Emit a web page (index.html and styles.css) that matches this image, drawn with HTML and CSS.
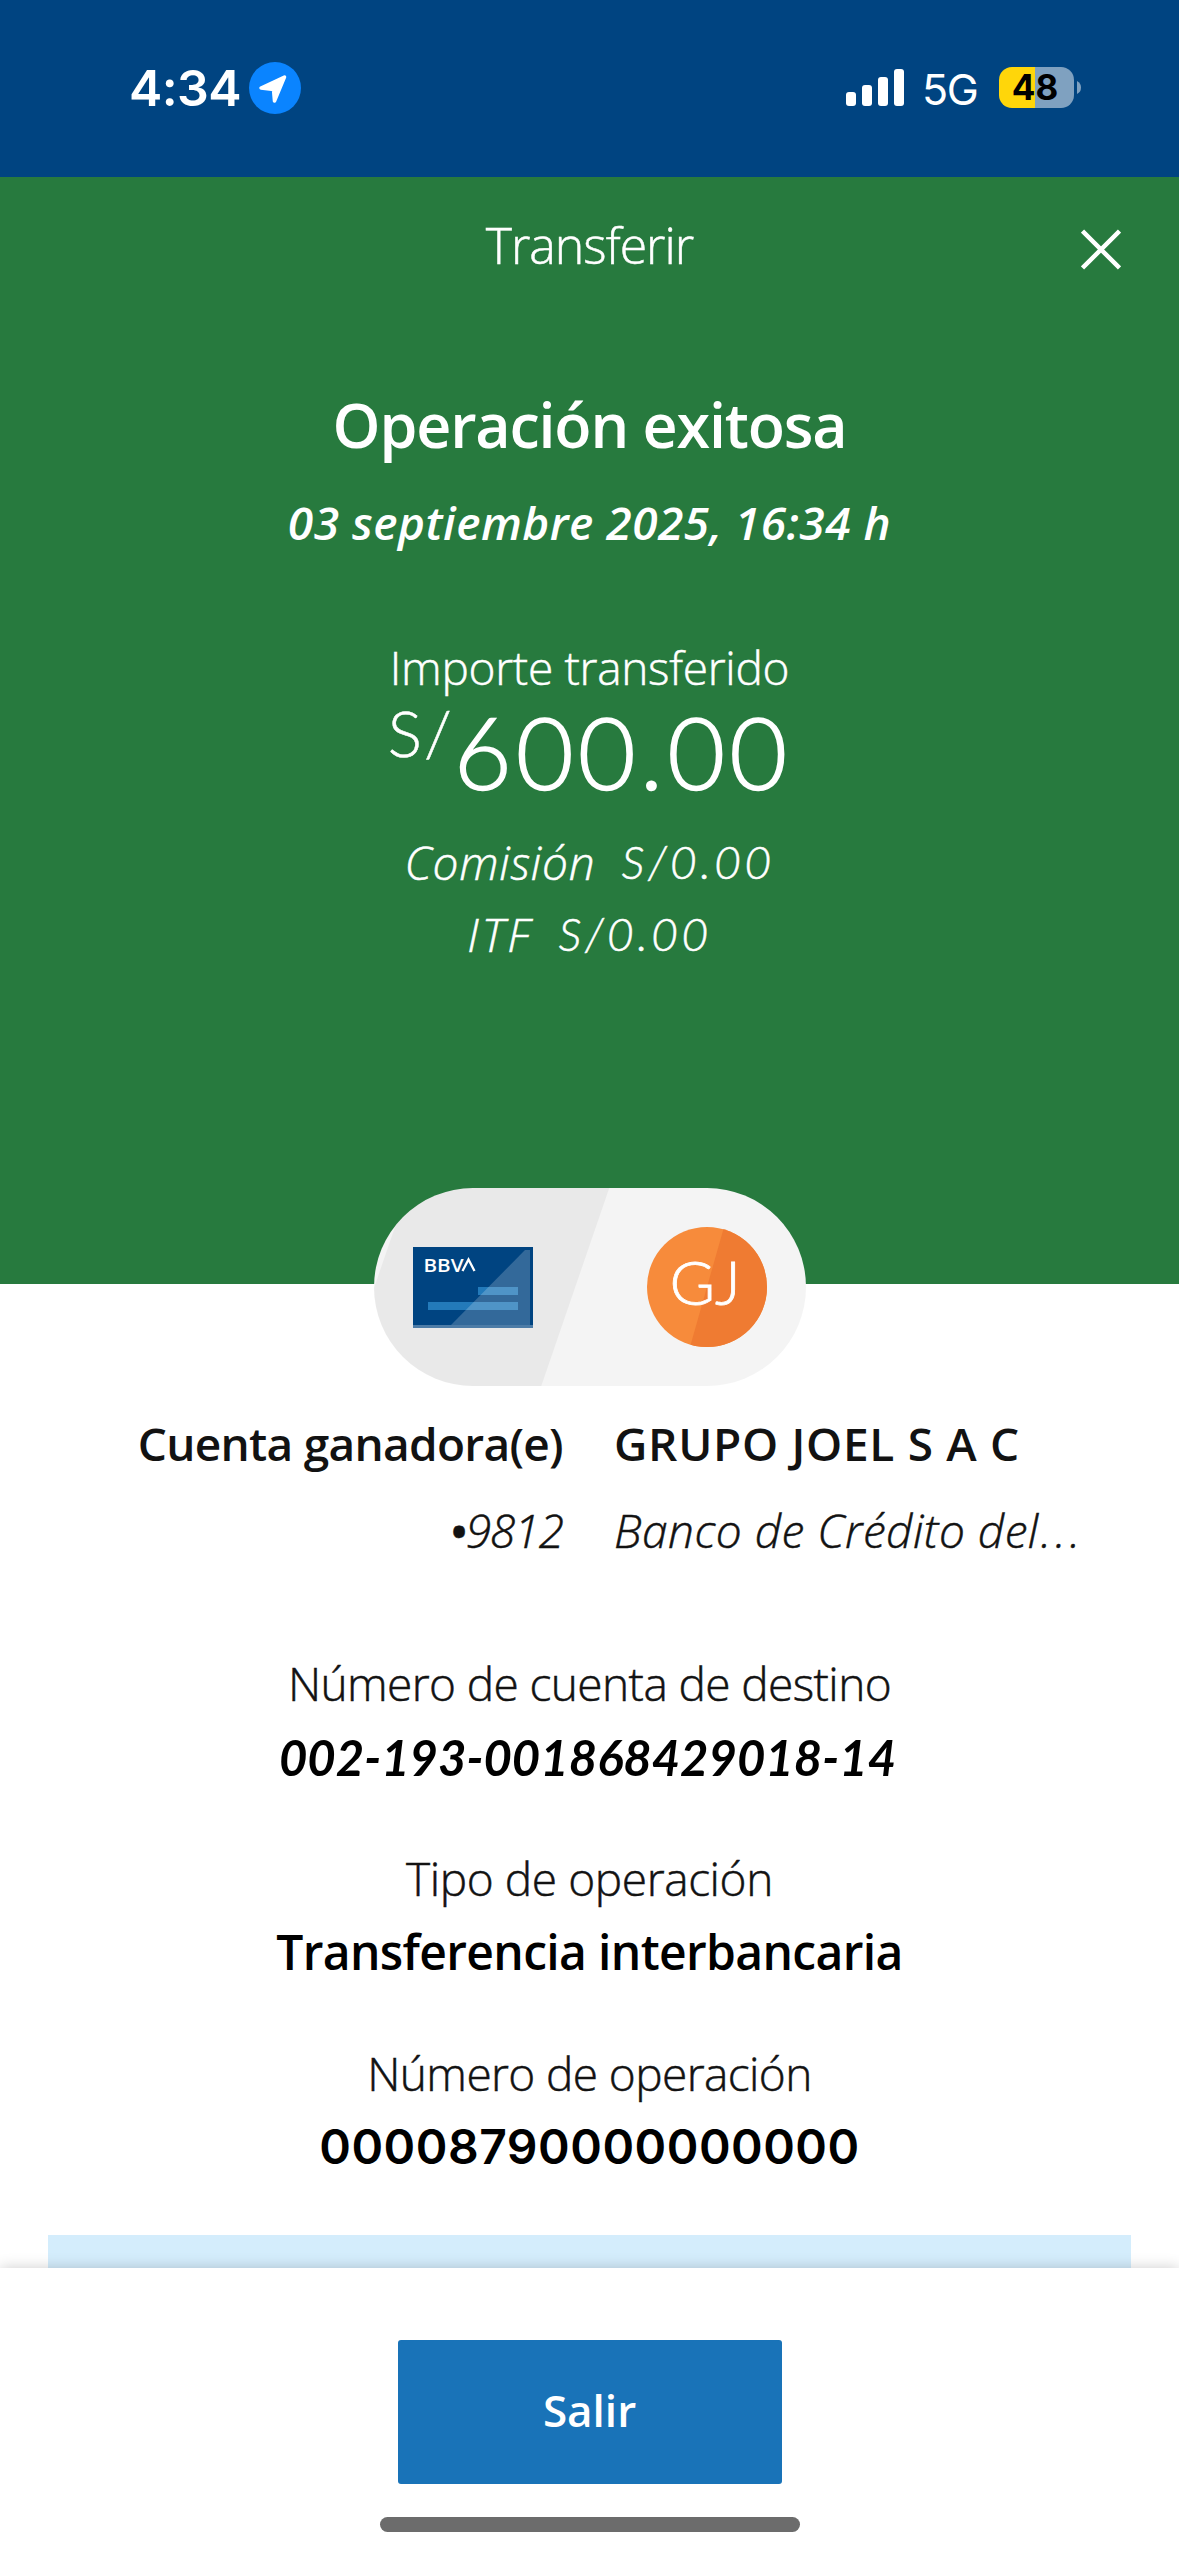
FILE: index.html
```html
<!DOCTYPE html>
<html lang="es">
<head>
<meta charset="utf-8">
<title>Transferir</title>
<link rel="stylesheet" href="styles.css">
</head>
<body>

<div class="status">
  <span class="time">4:34</span>
  <svg class="location" width="52" height="52" viewBox="0 0 52 52">
    <circle cx="26" cy="26" r="26" fill="#0a84ff"/>
    <path d="M12 26 L35.500 15 L25.500 39 L24.500 27.500 Z" fill="#fff" stroke="#fff" stroke-width="3.500" stroke-linejoin="round"/>
  </svg>
  <svg class="signal" width="58" height="37" viewBox="0 0 58 37" fill="#fff">
    <rect x="0" y="23" width="10" height="14" rx="3"/>
    <rect x="16" y="16" width="10" height="21" rx="3"/>
    <rect x="32" y="8" width="10" height="29" rx="3"/>
    <rect x="48" y="0" width="10" height="37" rx="3"/>
  </svg>
  <span class="network">5G</span>
  <div class="battery">48</div>
  <svg class="nub" width="4" height="13" viewBox="0 0 4 13"><path d="M0 0 Q4 2 4 6.500 Q4 11 0 13 Z" fill="#7fa1c0"/></svg>
</div>

<div class="hero">
  <div class="titlebar">
    <span class="title">Transferir</span>
    <svg class="close" width="40" height="41" viewBox="0 0 40 41">
      <path d="M1.500 2 L38.500 39 M38.500 2 L1.500 39" stroke="#fff" stroke-width="4.500"/>
    </svg>
  </div>
  <h1>Operación exitosa</h1>
  <p class="date">03 septiembre 2025, 16:34 h</p>
  <p class="caption">Importe transferido</p>
  <p class="amount"><span class="currency">S/</span>600.00</p>
  <p class="fee"><span>Comisión</span><span class="money">S/0.00</span></p>
  <p class="fee"><span class="tax">ITF</span><span class="money">S/0.00</span></p>
</div>

<div class="pill">
  <svg width="120" height="81" viewBox="0 0 120 81">
    <rect width="120" height="81" fill="#004481"/>
    <text class="logo" x="10.500" y="25" textLength="40" lengthAdjust="spacingAndGlyphs">BBV</text>
    <path d="M49.500 24 L55.500 12.500 L61.500 24" fill="none" stroke="#fff" stroke-width="2.300"/>
    <rect x="65" y="40" width="40" height="8" fill="#237aba"/>
    <rect x="15" y="55" width="90" height="8" fill="#237aba"/>
    <path d="M112 3 H117 V78 H38 Z" fill="#fff" fill-opacity=".2"/>
    <rect y="78" width="120" height="3" fill="#4d7ca7"/>
  </svg>
  <svg width="120" height="120" viewBox="0 0 120 120">
    <clipPath id="round"><circle cx="60" cy="60" r="60"/></clipPath>
    <g clip-path="url(#round)">
      <rect width="120" height="120" fill="#f78b3b"/>
      <path d="M77 0 H120 V120 H43 Z" fill="#ef7b32"/>
    </g>
    <text class="initials" x="22.500" y="78">GJ</text>
  </svg>
</div>

<div class="parties">
  <span class="name from">Cuenta ganadora(e)</span>
  <span class="name to">GRUPO JOEL S A C</span>
  <span class="bank from"><b>•</b>9812</span>
  <span class="bank to">Banco de Crédito del<span class="dots">...</span></span>
</div>

<div class="details">
  <p class="label">Número de cuenta de destino</p>
  <p class="value account">002-193-001868429018-14</p>
  <p class="label type">Tipo de operación</p>
  <p class="value">Transferencia interbancaria</p>
  <p class="label">Número de operación</p>
  <p class="value number">00008790000000000</p>
</div>

<div class="notice"></div>

<div class="footer">
  <button type="button">Salir</button>
  <div class="home"></div>
</div>

</body>
</html>
```
FILE: styles.css
```css
body {
  margin: 0;
  width: 1179px;
  height: 2556px;
  overflow: hidden;
  background: #fff;
  color: #121212;
  font-family: "Open Sans", sans-serif;
  font-size: 46px;
}
p, h1 {
  margin: 0;
  white-space: nowrap;
}

/* status bar */
.status {
  display: flex;
  align-items: center;
  box-sizing: border-box;
  height: 177px;
  padding: 0 98px 2px 129px;
  background: #004481;
  color: #fff;
  font-family: "Inter", sans-serif;
}
.time {
  width: 120px;
  font-size: 50px;
  font-weight: 600;
  letter-spacing: -0.6px;
}
.signal {
  margin: 0 18px 0 auto;
}
.network {
  width: 77px;
  padding-top: 3px;
  font-size: 43px;
  letter-spacing: -1.5px;
}
.battery {
  box-sizing: border-box;
  width: 75px;
  height: 41px;
  padding-right: 3px;
  border-radius: 13px;
  background: linear-gradient(to right, #ffd60a 36px, #7fa1c0 36px);
  color: #000;
  font-size: 35px;
  font-weight: 700;
  line-height: 41px;
  text-align: center;
}
.nub {
  margin-left: 3px;
}

/* green header */
.hero {
  height: 1107px;
  background: #277a3e;
  color: #fff;
  text-align: center;
}
.titlebar {
  display: grid;
  grid-template-columns: 1fr auto 1fr;
  align-items: center;
  height: 137px;
  padding: 0 58px;
}
.title {
  grid-column: 2;
  font-size: 50px;
  font-weight: 300;
  line-height: 137px;
  letter-spacing: -1px;
  -webkit-text-stroke: 0.5px;
}
.close {
  justify-self: end;
  margin-top: 7px;
}
h1 {
  margin-top: 66px;
  font-size: 61px;
  font-weight: 600;
  line-height: 90px;
  letter-spacing: -1.2px;
}
.date {
  margin-top: 22px;
  font-weight: 600;
  font-style: italic;
  line-height: 60px;
  letter-spacing: 0.5px;
}
.caption {
  margin-top: 85px;
  font-weight: 300;
  line-height: 60px;
  letter-spacing: -0.3px;
  -webkit-text-stroke: 0.5px;
}
.amount {
  margin-top: -1px;
  font-family: "Lato", sans-serif;
  font-size: 100px;
  font-weight: 300;
  line-height: 110px;
  letter-spacing: 4px;
  -webkit-text-stroke: 1.5px;
}
.currency {
  font-size: 64px;
  line-height: 0;
  vertical-align: 33px;
  letter-spacing: 2px;
  -webkit-text-stroke: 0.5px;
}
.fee {
  display: flex;
  justify-content: center;
  gap: 26px;
  font-weight: 300;
  font-style: italic;
  line-height: 72px;
  letter-spacing: 0.8px;
  -webkit-text-stroke: 0.5px;
}
.amount + .fee {
  margin-top: 20px;
}
.tax {
  letter-spacing: 3px;
}
.money {
  font-family: "Lato", sans-serif;
  letter-spacing: 3.5px;
}

/* origin and destination */
.pill {
  display: flex;
  align-items: center;
  justify-content: space-between;
  box-sizing: border-box;
  width: 432px;
  height: 198px;
  margin: -96px auto 0;
  padding: 0 39px;
  border-radius: 99px;
  background: linear-gradient(108.95deg, #f4f4f4 32px, #e9e9e9 33px, #e9e9e9 222px, #f4f4f4 223px);
}
.logo {
  fill: #fff;
  font-size: 18px;
  font-weight: 600;
}
.initials {
  fill: #fff;
  font-family: "Lato", sans-serif;
  font-size: 62px;
  font-weight: 300;
  stroke: #fff;
  stroke-width: 0.8px;
}
.parties {
  display: grid;
  grid-template-columns: 563px 1fr;
  column-gap: 51px;
  row-gap: 7px;
  margin-top: 17px;
  line-height: 80px;
  white-space: nowrap;
}
.from {
  text-align: right;
}
.name {
  font-weight: 600;
}
.name.from {
  letter-spacing: -0.7px;
}
.name.to {
  letter-spacing: 0.7px;
}
.bank {
  height: 80px;
  font-weight: 300;
  font-style: italic;
  letter-spacing: 0.5px;
  -webkit-text-stroke: 0.5px;
}
.bank.from {
  letter-spacing: -1px;
}
.bank b {
  font-weight: 600;
}
.dots {
  margin-left: 2px;
  letter-spacing: 4px;
}

/* operation details */
.details {
  margin-top: 78px;
  text-align: center;
  line-height: 70px;
}
.label {
  font-weight: 300;
  letter-spacing: -0.6px;
  -webkit-text-stroke: 0.5px;
}
.type {
  letter-spacing: -0.4px;
}
.value {
  margin: 4px 0 51px;
  color: #000;
  font-size: 48px;
  font-weight: 600;
  letter-spacing: -0.65px;
}
.account {
  padding-right: 4px;
  font-family: "Lato", sans-serif;
  font-size: 49px;
  font-style: italic;
  font-weight: 700;
  letter-spacing: 0;
}
.number {
  margin-bottom: 0;
  font-family: "Inter", sans-serif;
  letter-spacing: 0.5px;
}
.notice {
  height: 33px;
  margin: 53px 48px 0;
  background: #d4edfc;
}

/* bottom bar */
.footer {
  position: relative;
  box-sizing: border-box;
  height: 288px;
  padding-top: 72px;
  background: #fff;
  box-shadow: 0 0 14px rgba(0, 0, 0, 0.2);
}
button {
  display: block;
  width: 384px;
  height: 144px;
  margin: 0 auto 33px;
  padding: 0 0 5px;
  border: 0;
  border-radius: 3px;
  background: #1973b8;
  color: #fff;
  font: 600 44px "Open Sans", sans-serif;
}
.home {
  width: 420px;
  height: 15px;
  margin: 0 auto;
  border-radius: 8px;
  background: #6c6c6c;
}
```
